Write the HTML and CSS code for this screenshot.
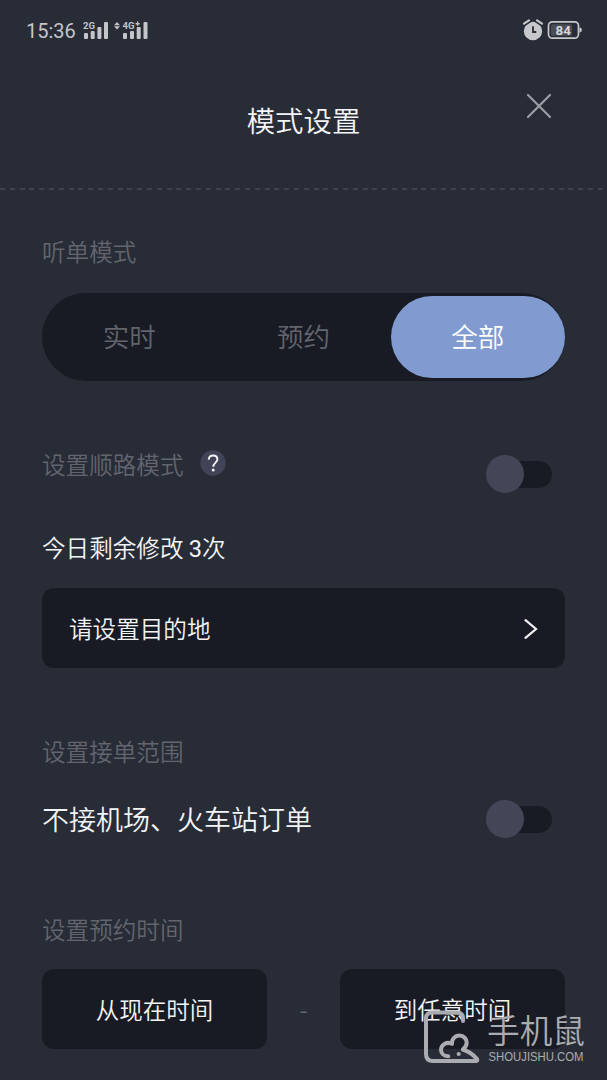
FILE: index.html
```html
<!DOCTYPE html>
<html lang="zh-CN">
<head>
<meta charset="utf-8">
<title>模式设置</title>
<link rel="stylesheet" href="styles.css">
</head>
<body>
<div class="screen">
  <div class="status">
    <span class="clock">15:36</span>
    <svg class="signals" width="68" height="22" viewBox="0 0 68 22">
      <g fill="#c4c5c9">
        <rect x="2" y="14" width="4" height="6" rx="1"/><rect x="8.7" y="12" width="4" height="8" rx="1"/><rect x="15.4" y="8" width="4" height="12" rx="1"/><rect x="22" y="3" width="4" height="17" rx="1"/>
        <path d="M35 3l3 3.2h-6zM35 10.4l3-3.2h-6z"/>
        <rect x="41" y="14" width="4" height="6" rx="1"/><rect x="48" y="12" width="4" height="8" rx="1"/><rect x="54.7" y="8" width="4" height="12" rx="1"/><rect x="61.5" y="3" width="4" height="17" rx="1"/>
        <path d="M54.900 2.600h1.400v1.400h1.400v1.400h-1.400v1.400h-1.400V5.400h-1.400V4h1.400z"/>
      </g>
      <text class="net" x="1" y="9.600" textLength="12" lengthAdjust="spacingAndGlyphs">2G</text>
      <text class="net" x="40.500" y="9.600" textLength="12" lengthAdjust="spacingAndGlyphs">4G</text>
    </svg>
    <svg class="alarm" width="22" height="24" viewBox="0 0 22 24">
      <circle cx="11" cy="13" r="9.200" fill="#c7c8cc"/>
      <path d="M2 6.200 7.200 2.600M20 6.200l-5.200-3.600" stroke="#282c37" stroke-width="4.400" stroke-linecap="round"/>
      <path d="M2 5.700 7 2.300M20 5.700l-5-3.400" stroke="#c7c8cc" stroke-width="2.200" stroke-linecap="round"/>
      <path d="M11 8.300v5.700h3.300" stroke="#282c37" stroke-width="1.800" fill="none"/>
    </svg>
    <svg class="battery" width="36" height="20" viewBox="0 0 36 20">
      <rect x="1.500" y="1.800" width="30" height="16.400" rx="4" fill="none" stroke="#c7c8cc" stroke-width="1.700"/>
      <rect x="4" y="4.200" width="21" height="11.600" rx="1.500" fill="#4b4e58"/>
      <path d="M32.500 7.600a2.400 2.400 0 0 1 0 4.800z" fill="#c7c8cc"/>
      <text class="level" x="8.600" y="14.800" textLength="15.400" lengthAdjust="spacingAndGlyphs">84</text>
    </svg>
  </div>
  <header class="header">
    <h1 class="title">模式设置</h1>
    <svg class="close" width="26" height="26" viewBox="0 0 26 26"><path d="M2 2l22 22M24 2 2 24" stroke="#9c9ea7" stroke-width="2.200" stroke-linecap="round"/></svg>
  </header>
  <div class="divider"></div>
  <main class="content">
    <h2 class="label first">听单模式</h2>
    <div class="segments">
      <span class="segment">实时</span>
      <span class="segment">预约</span>
      <span class="segment active">全部</span>
    </div>
    <div class="route-row">
      <h2 class="label">设置顺路模式</h2>
      <svg class="help" width="26" height="26" viewBox="0 0 26 26">
        <circle cx="13" cy="13" r="12.700" fill="#414356"/>
        <path d="M8.700 9.600c.2-2.600 1.900-4.200 4.400-4.200 2.600 0 4.300 1.600 4.300 3.900 0 3.500-4.100 3.700-4.100 7.400" stroke="#f2f2f5" stroke-width="2" fill="none"/>
        <circle cx="13.200" cy="20" r="1.500" fill="#f2f2f5"/>
      </svg>
      <div class="toggle"><span class="knob"></span></div>
    </div>
    <p class="remaining">今日剩余修改 <span class="count">3</span>次</p>
    <div class="destination">
      <span>请设置目的地</span>
      <svg class="chevron" width="14" height="22" viewBox="0 0 14 22"><path d="M1.500 2.200 12 11 1.500 19.800" stroke="#f0f1f3" stroke-width="2.200" fill="none" stroke-linecap="round"/></svg>
    </div>
    <h2 class="label range">设置接单范围</h2>
    <div class="station-row">
      <span class="station">不接机场、火车站订单</span>
      <div class="toggle"><span class="knob"></span></div>
    </div>
    <h2 class="label time">设置预约时间</h2>
    <div class="times">
      <span class="time-box">从现在时间</span>
      <span class="dash">-</span>
      <span class="time-box">到任意时间</span>
    </div>
  </main>
  <svg class="watermark" width="170" height="60" viewBox="0 0 170 60">
    <g fill="none" stroke="#aaacb1" stroke-width="4" stroke-linecap="round" stroke-linejoin="round">
      <path d="M43 11V8.500q0-6-6-6H12q-6 0-6 6V44q0 7 7 7h42q4 0 1-3c-3.500-4-8-6.800-13-8.500"/>
      <path d="M28.300 46.200C23.500 46.200 21 43 21 39.700c0-5 5.500-8.500 11-5.900-.5-4.500 3-8.200 7.500-8.200 4.300 0 7.200 3.400 7.200 7 0 2.600-1.400 5-3.700 6.900"/>
    </g>
    <circle cx="38.700" cy="44" r="2.100" fill="#aaacb1"/>
    <text class="brand" x="67" y="33" textLength="98" lengthAdjust="spacingAndGlyphs">手机鼠</text>
    <text class="domain" x="68.500" y="50.500" textLength="95" lengthAdjust="spacingAndGlyphs">SHOUJISHU.COM</text>
  </svg>
</div>
</body>
</html>
```
FILE: styles.css
```css
* { box-sizing: border-box; }
body { margin: 0; background: #282c37; }
h1, h2, p { margin: 0; font-weight: inherit; }
svg { display: block; flex: none; }
.screen {
  position: relative;
  width: 607px;
  height: 1080px;
  overflow: hidden;
  background: #282c37;
  color: #f3f4f6;
  font-family: "Noto Sans CJK SC", sans-serif;
  font-weight: 350;
}
.status { display: flex; align-items: center; height: 60px; padding: 0 25px 0 26px; }
.clock { width: 56px; font: 400 20px/24px Roboto, sans-serif; color: #c4c5c9; padding-top: 2px; }
.net { font: 700 9.5px Roboto, sans-serif; fill: #c4c5c9; stroke: #282c37; stroke-width: 1.5px; paint-order: stroke; }
.alarm { margin-left: auto; margin-right: 3px; }
.battery { margin-right: -1px; }
.level { font: 700 13px Roboto, sans-serif; fill: #d5d6d9; }
.header {
  display: grid;
  grid-template-columns: 1fr auto 1fr;
  height: 128px;
  padding: 39px 55px 0;
}
.title { grid-column: 2; font-size: 28.4px; line-height: 42px; }
.close { justify-self: end; margin-top: -6px; }
.divider {
  height: 2px;
  background: repeating-linear-gradient(90deg, #3f434d 0 5px, transparent 5px 9.8px);
}
.content { padding: 0 42px; }
.label { font-size: 23.600px; line-height: 36px; color: #62656d; }
.first { margin-top: 43px; }
.segments {
  display: grid;
  grid-template-columns: repeat(3, 1fr);
  height: 88px;
  margin-top: 24px;
  padding: 3px 0;
  border-radius: 44px;
  background: #191b24;
}
.segment {
  display: flex;
  align-items: center;
  justify-content: center;
  padding-bottom: 3px;
  font-size: 26.500px;
  color: #62656d;
}
.active { background: #819bd1; color: #fff; border-radius: 41px; }
.route-row { display: flex; align-items: flex-start; height: 48px; margin-top: 65px; }
.help { margin: 4px 0 0 16px; }
.toggle {
  display: flex;
  align-items: center;
  flex: none;
  width: 66px;
  height: 38px;
  margin-left: auto;
  margin-right: 13px;
}
.toggle::after {
  content: "";
  width: 46px;
  height: 27px;
  margin-left: -18px;
  border-radius: 14px;
  background: #191b24;
}
.knob { position: relative; z-index: 1; flex: none; width: 38px; height: 38px; border-radius: 50%; background: #444657; }
.route-row .toggle { margin-top: 9px; }
.remaining { height: 36px; margin-top: 35px; font-size: 23.600px; line-height: 36px; }
.count { font-family: Roboto, sans-serif; font-weight: 400; line-height: 1; }
.destination {
  display: flex;
  align-items: center;
  justify-content: space-between;
  height: 80px;
  margin-top: 23px;
  padding: 0 27px;
  border-radius: 12px;
  background: #191b24;
  font-size: 23.600px;
}
.chevron { margin-top: 2px; }
.range { margin-top: 65px; }
.station-row { display: flex; align-items: center; height: 38px; margin-top: 31px; font-size: 27px; }
.station { padding-bottom: 2px; }
.time { margin-top: 73px; }
.times { display: grid; grid-template-columns: 225px 1fr 225px; align-items: center; margin-top: 22px; }
.time-box {
  height: 80px;
  border-radius: 12px;
  background: #191b24;
  font-size: 23.500px;
  line-height: 80px;
  text-align: center;
}
.dash { color: #62656d; font-size: 23.500px; text-align: center; }
.watermark { position: absolute; left: 420px; top: 1010px; }
.brand { font: 350 33px "Noto Sans CJK SC", sans-serif; fill: #aaacb1; }
.domain { font: 12px "Liberation Sans", sans-serif; fill: #aaacb1; }
```
